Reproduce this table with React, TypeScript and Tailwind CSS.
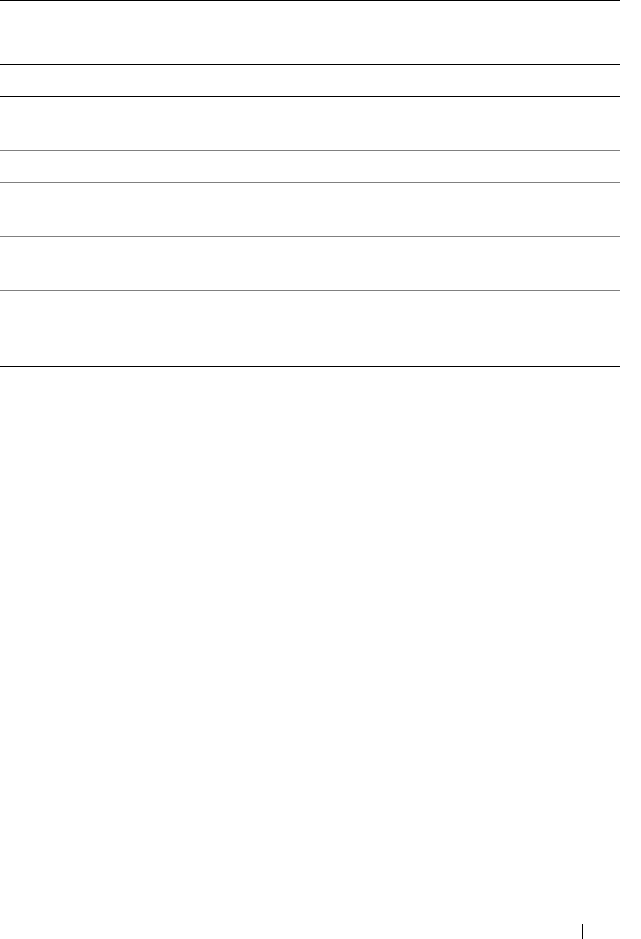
export default function App() {
  return (
    <div className="flex flex-col h-[939px] w-[641px] bg-white overflow-hidden" style={{ fontFamily: '"Liberation Serif", serif' }}>
      <div className="w-[620px]">
        <div className="h-[65px] border-t border-b border-black" />
        <div className="h-[32px] border-b border-black" />
        <div className="h-[54px] border-b border-[#808080]" />
        <div className="h-[32px] border-b border-[#808080]" />
        <div className="h-[54px] border-b border-[#808080]" />
        <div className="h-[54px] border-b border-[#808080]" />
        <div className="h-[76px] border-b border-black" />
      </div>
      <div className="mt-auto flex">
        <div className="ml-[582px] w-px h-[15px] bg-black" />
      </div>
    </div>
  );
}
